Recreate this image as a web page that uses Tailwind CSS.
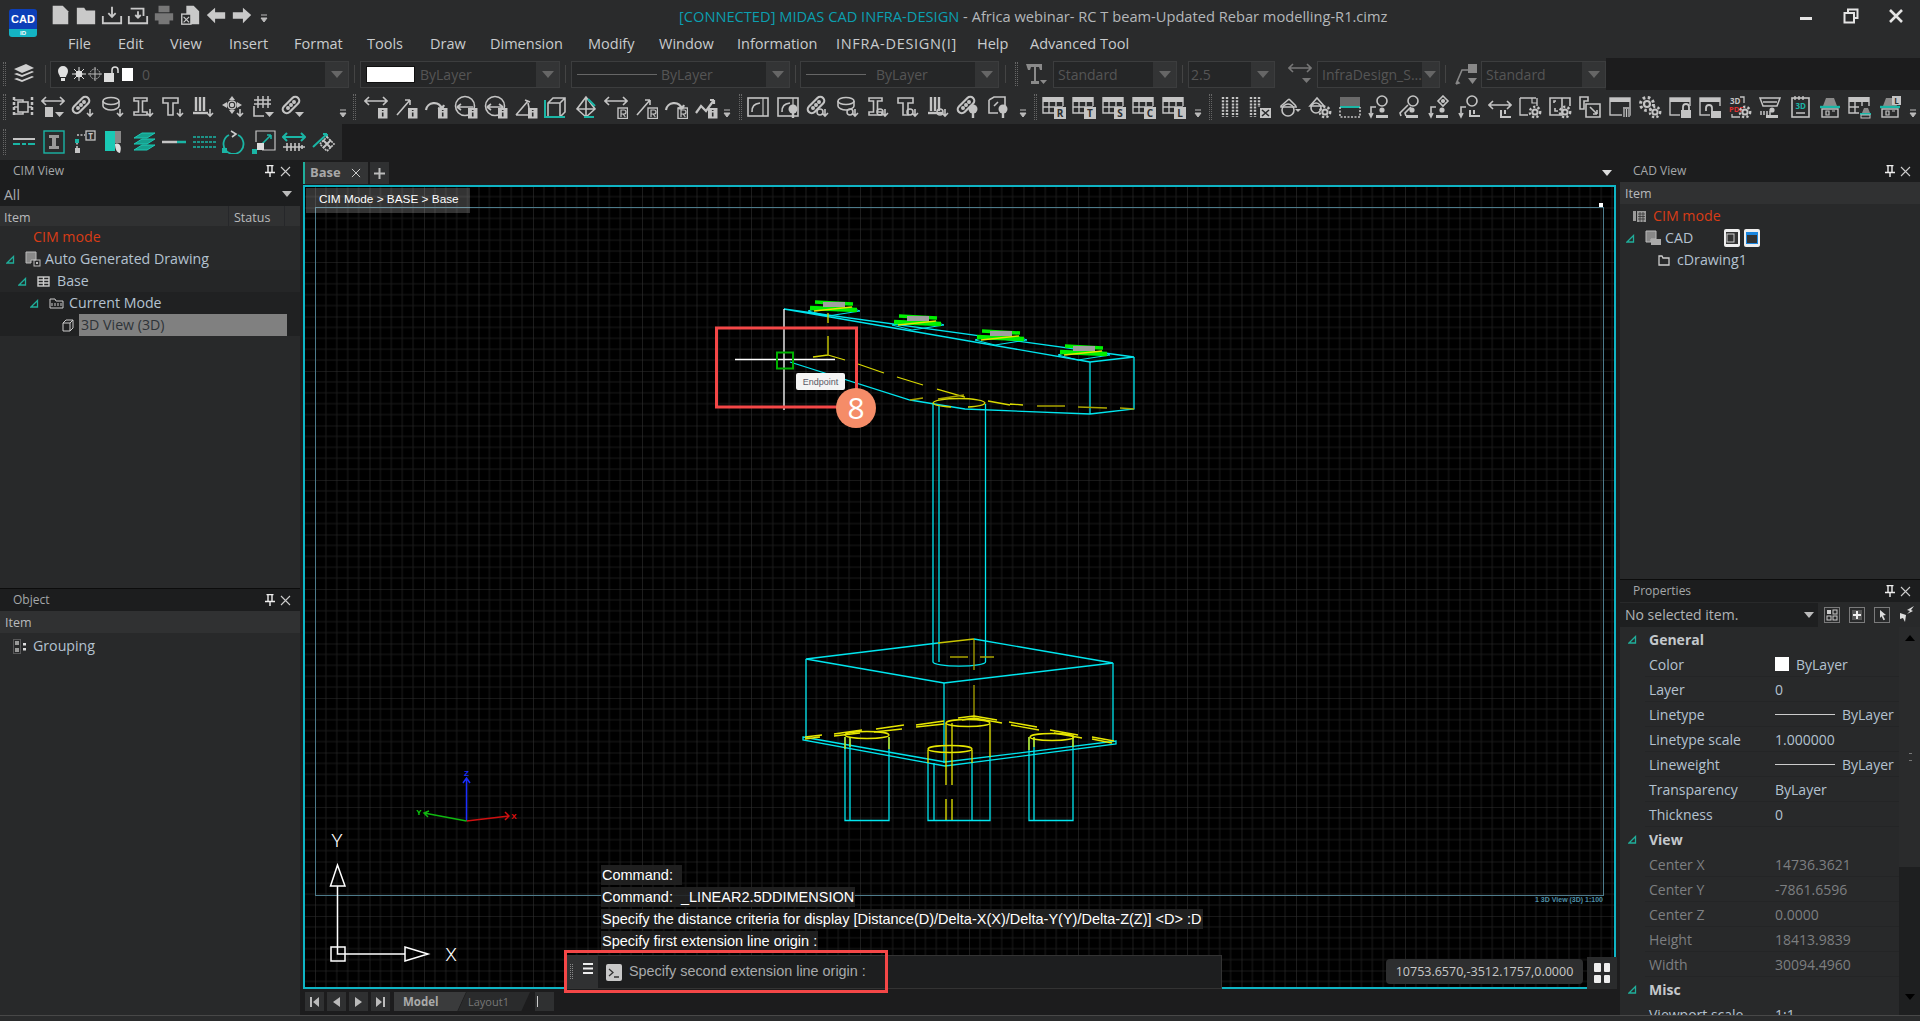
<!DOCTYPE html>
<html lang="en">
<head>
  <meta charset="UTF-8">
  <title>MIDAS CAD INFRA-DESIGN</title>
  <script src="https://cdn.jsdelivr.net/npm/@tailwindcss/browser@4"></script>
</head>
<body class="w-[1920px] h-[1021px] overflow-hidden flex flex-col bg-[#1c1c1d] text-[#c4c4c4] font-['Open_Sans',sans-serif]">

<!-- shared icon parts -->
<svg class="absolute w-0 h-0">
  <defs>
    <path id="car" d="M14 17h9l-4.5 5z" fill="currentColor" stroke="none"/>
    <path id="dn" d="M19 14v7M16 18l3 3 3-3"/>
    <g id="pill"><rect x="0" y="6" width="20" height="8" rx="4" transform="rotate(-45 10 10)" stroke-width="2.2"/><circle cx="7" cy="13" r="1.2" fill="currentColor"/><circle cx="10" cy="10" r="1.2" fill="currentColor"/><circle cx="13" cy="7" r="1.2" fill="currentColor"/></g>
    <g id="ring"><ellipse cx="10" cy="6" rx="8" ry="3.5"/><path d="M2 6v5c0 2 4 4 8 4s8-2 8-4V6"/></g>
    <path id="ibeam" d="M3 3h13v3h-4.5v11H16v3H3v-3h4.5V6H3z"/>
    <path id="tbeam" d="M2 3h15v5h-5v12H7V8H2z"/>
    <g id="comb"><path d="M5 2v14M9 2v14M13 2v14" stroke-width="2.4"/><path d="M2 18h15" stroke-width="2.4"/></g>
    <g id="hier"><rect x="7" y="7" width="10" height="10"/><path d="M3 2v20M21 2v20" stroke-width="2.5" stroke-dasharray="3 2"/><path d="M3 5h9v2M3 19h9v-2M21 12h-4M3 12h4"/></g>
    <path id="hdim" d="M1 6h22M5 2L1 6l4 4M19 2l4 4-4 4"/>
    <path id="ddim" d="M3 20L16 5M16 5h-5M16 5v5"/>
    <path id="arc" d="M2 15c1-8 13-10 16-1M18 14l-4-1M18 14l2-4" stroke-width="2.2"/>
    <g id="circ"><circle cx="11" cy="11" r="9.5"/><path d="M3 12h16M3 12l4-3M3 12l4 3"/></g>
    <path id="ang" d="M2 20L14 6M2 20h14M11 5l5 2M14 8l2 10"/>
    <path id="zig" d="M2 18l5-7 5 5 8-11M20 5l-4 0M20 5v4" stroke-width="2.2"/>
    <g id="bi"><rect x="14" y="13" width="9.5" height="10.5" fill="currentColor" stroke="none"/><path d="M18.7 15v1M18.7 17.5v4" stroke="#2a2b2c" stroke-width="1.6"/></g>
    <g id="br"><rect x="14" y="13" width="9.5" height="10.5" fill="none" stroke="currentColor" stroke-width="1.4"/><path d="M17 22v-7h3a2 2 0 010 4h-3M19 19l2.4 3" stroke-width="1.2"/></g>
    <g id="panel"><rect x="2" y="3" width="20" height="18"/><path d="M17 3v18" stroke-width="1.2"/><path d="M6 17c0-6 2-8 8-9" /></g>
    <g id="bulb"><circle cx="17" cy="14" r="4.5" fill="currentColor" stroke="none"/><path d="M17 18v5" stroke-width="2.4"/></g>
    <circle id="rn" cx="14" cy="17" r="3" stroke-width="1.5"/>
    <g id="tbl"><rect x="1" y="2" width="20" height="5" fill="currentColor" stroke="none"/><path d="M1 2v16h11M21 2v9M1 12h20M7 7v11M14 7v4" stroke-width="1.4"/></g>
    <g id="dots"><path d="M5 2v20M9 2v20M15 2v20M19 2v20" stroke-width="2.4" stroke-dasharray="2 1.2"/></g>
    <g id="gear"><circle cx="17" cy="17" r="2.6" stroke-width="2"/><circle cx="17" cy="17" r="5.2" stroke-width="2.4" stroke-dasharray="2.2 2.2"/></g>
    <g id="win"><rect x="2" y="3" width="20" height="17" stroke-width="1.4"/><path d="M2 5h20" stroke-width="4"/></g>
    <g id="per"><circle cx="14" cy="15" r="2.6" fill="currentColor" stroke="none"/><path d="M8 21.5h12" stroke-width="3"/></g>
    <g id="node"><circle cx="14" cy="6" r="5"/><path d="M3 22V12h5M1 18l2 4 2-4"/></g>
    <g id="lock"><rect x="13" y="15" width="10" height="8" fill="currentColor" stroke="none"/><path d="M15 15v-3a3 3 0 016 0v3" stroke-width="1.8"/></g>
    <g id="house"><path d="M5 11L8 3h8l3 8" fill="#8a8a8a" stroke="none"/><path d="M2 12h20" stroke="#1ab5a5" stroke-width="2.4"/><rect x="4" y="14" width="16" height="8" stroke-width="1.4"/><path d="M8 16h3v4H8zM14 16h3" stroke-width="1.2"/></g>
    <path id="tri" d="M1 8h6.5V1.5zM3.5 6.5" fill="none" stroke="#1fae9b" stroke-width="1.3"/>
    <g id="pin"><path d="M2.5 0.5h7M4 1v6M8 1v6M1 7.5h10M6 8v4" stroke="#eee" fill="none" stroke-width="1.4"/></g>
    <path id="cross" d="M1 1l9 9M10 1l-9 9" stroke="#ccc" fill="none" stroke-width="1.1"/>
    <g id="plate">
      <path d="M-26 4l9-3M-26 4L-6 9 26 4M18 1l8 3" stroke="#00e5ee" fill="none"/>
      <path d="M-19-5L19-3" stroke="#00f000" stroke-width="3.5"/>
      <path d="M-24 1L23 3" stroke="#00f000" stroke-width="4.500"/>
      <rect x="-11" y="-5" width="22" height="5" fill="#a0a0a0"/>
      <path d="M-20 4L18 0" stroke="#e6e600" stroke-width="1.5"/>
    </g>
    <pattern id="grid" x="424" y="807" width="54.5" height="54.5" patternUnits="userSpaceOnUse">
      <path d="M10.9 0v54.5M21.8 0v54.5M32.7 0v54.5M43.6 0v54.5M0 10.9h54.5M0 21.8h54.5M0 32.7h54.5M0 43.6h54.5" stroke="#1a1a1a" fill="none"/>
      <path d="M0 0v54.5M0 0h54.5" stroke="#2f2f2f" fill="none" stroke-width="1.2"/>
    </pattern>
  </defs>
</svg>

<!-- title bar -->
<div class="h-[30px] shrink-0 bg-[#2a2b2c] flex items-start">
  <div class="ml-[9px] mt-[9px] w-[28px] h-[28px] rounded-[3px] overflow-hidden flex flex-col relative z-10">
    <div class="h-[20px] bg-[#0d3fb8] text-white text-[11px] leading-[20px] font-bold text-center font-['Liberation_Sans',sans-serif]">CAD</div>
    <div class="h-[8px] bg-[#14b4c4] text-white text-[6px] leading-[8px] font-bold text-center font-['Liberation_Sans',sans-serif]">ID</div>
  </div>
  <div class="ml-[12px] mt-[4px] flex gap-[4px] text-[#c9c9c9] [&>svg]:w-[22px] [&>svg]:h-[22px] [&>svg]:fill-none [&>svg]:stroke-current [&>svg]:stroke-2">
    <svg viewBox="0 0 24 24"><path d="M4 2h11l6 6v14H4z" fill="currentColor" stroke="none"/></svg>
    <svg viewBox="0 0 24 24"><path d="M2 4h8l2 3h10v15H2z" fill="currentColor" stroke="none"/></svg>
    <svg viewBox="0 0 24 24"><path d="M2 13v8h20v-8M12 3v11M8 10l4 4 4-4"/></svg>
    <svg viewBox="0 0 24 24"><path d="M2 13v8h20v-8M4 5h14v8M12 8v7M9 12l3 3 3-3"/></svg>
    <svg viewBox="0 0 24 24" class="text-[#777]"><path d="M6 2h12v7H6zM2 10h20v8H2zM6 16h12v6H6z" fill="currentColor" stroke="none"/></svg>
    <svg viewBox="0 0 24 24"><path d="M8 2h8l6 6v14H13V11H8z" fill="currentColor" stroke="none"/><rect x="3" y="11" width="10" height="11" stroke-width="1.5"/><path d="M5 14l6 6M11 14l-6 6" stroke-width="1.3"/></svg>
    <svg viewBox="0 0 24 24"><path d="M2 12l9-8v5h11v7H11v5z" fill="currentColor" stroke="none"/></svg>
    <svg viewBox="0 0 24 24"><path d="M22 12l-9-8v5H2v7h11v5z" fill="currentColor" stroke="none"/></svg>
  </div>
  <svg class="w-[8px] h-[10px] ml-[7px] mt-[14px] text-[#bbb]" viewBox="0 0 8 10"><path d="M1 1h6M1 4h6l-3 4z" stroke="currentColor" fill="currentColor"/></svg>
  <div class="ml-[411px] mt-[5px] text-[14.65px] leading-[22px] whitespace-nowrap text-[#b4b7ba]"><span class="text-[#0b9fb0]">[CONNECTED] MIDAS CAD INFRA-DESIGN</span> - Africa webinar- RC T beam-Updated Rebar modelling-R1.cimz</div>
  <div class="ml-auto flex mr-[2px] text-[#e4e4e4]">
    <div class="w-[45px] h-[32px] flex items-center justify-center"><div class="w-[12px] h-[3px] bg-[#e4e4e4] mt-[4px]"></div></div>
    <div class="w-[45px] h-[32px] flex items-center justify-center"><svg class="w-[16px] h-[16px]" viewBox="0 0 16 16" fill="none" stroke="currentColor" stroke-width="2"><path d="M5 4V1.5h9.5V10H11"/><rect x="1.5" y="5" width="9.5" height="9.5"/></svg></div>
    <div class="w-[45px] h-[32px] flex items-center justify-center"><svg class="w-[14px] h-[14px]" viewBox="0 0 14 14" stroke="currentColor" stroke-width="2.6"><path d="M1 1l12 12M13 1L1 13"/></svg></div>
  </div>
</div>

<!-- menu -->
<div class="h-[28px] shrink-0 bg-[#2a2b2c] flex items-center pl-[68px] text-[14.5px] text-[#c9ccce] whitespace-nowrap">
  <span class="w-[50px]">File</span>
  <span class="w-[52px]">Edit</span>
  <span class="w-[59px]">View</span>
  <span class="w-[65px]">Insert</span>
  <span class="w-[73px]">Format</span>
  <span class="w-[63px]">Tools</span>
  <span class="w-[60px]">Draw</span>
  <span class="w-[98px]">Dimension</span>
  <span class="w-[71px]">Modify</span>
  <span class="w-[78px]">Window</span>
  <span class="w-[99px]">Information</span>
  <span class="w-[141px] tracking-[0.7px]">INFRA-DESIGN(I]</span>
  <span class="w-[53px]">Help</span>
  <span>Advanced Tool</span>
</div>

<!-- property toolbar -->
<div class="h-[32px] shrink-0 flex">
  <div class="w-[1606px] bg-[#2a2b2c] flex items-center text-[14px] text-[#555] relative">
    <div class="ml-[3px] w-[3px] h-[24px] border-x border-dotted border-[#666]"></div>
    <svg class="ml-[6px] w-[24px] h-[24px] text-[#cfcfcf]" viewBox="0 0 24 24" fill="currentColor"><path d="M2 7l12-5 8 4-12 5zM2 12l3-1 5 2 10-4 2 1-12 5zM2 17l3-1 5 2 10-4 2 1-12 5z"/></svg>
    <div class="ml-[9px] w-px h-[18px] bg-[#444]"></div>
    <div class="ml-[4px] w-[299px] h-[27px] flex items-center border border-[#3c3d3e] bg-[#252627]">
      <svg class="ml-[6px] w-[12px] h-[18px] text-[#e0e0e0]" viewBox="0 0 12 18" fill="currentColor"><path d="M6 1a5 5 0 015 5c0 3-2 4-2 6H3c0-2-2-3-2-6a5 5 0 015-5zM4 13h4v3H4z"/></svg>
      <svg class="ml-[3px] w-[14px] h-[14px] text-[#ddd]" viewBox="0 0 14 14" stroke="currentColor"><path d="M7 0v14M0 7h14M2 2l10 10M12 2L2 12"/><circle cx="7" cy="7" r="3" fill="currentColor"/></svg>
      <svg class="ml-[2px] w-[14px] h-[14px] text-[#bbb]" viewBox="0 0 14 14" stroke="currentColor"><circle cx="7" cy="7" r="5" fill="none" stroke-dasharray="1.5 1"/><path d="M7 0v14M0 7h14"/></svg>
      <svg class="ml-[2px] w-[16px] h-[16px] text-[#ddd]" viewBox="0 0 16 16"><path d="M0 7h10v9H0z" fill="currentColor"/><path d="M8 7V4a3 3 0 016 0v3" fill="none" stroke="currentColor" stroke-width="1.5"/></svg>
      <div class="ml-[2px] w-[11px] h-[13px] bg-white"></div>
      <span class="ml-[9px]">0</span>
      <div class="ml-auto w-[23px] h-full bg-[#333435] flex items-center justify-center"><div class="w-0 h-0 border-x-[6px] border-x-transparent border-t-[7px] border-t-[#666]"></div></div>
    </div>
    <div class="ml-[5px] w-px h-[18px] bg-[#444]"></div>
    <div class="ml-[5px] w-[200px] h-[27px] flex items-center border border-[#3c3d3e] bg-[#252627]">
      <div class="ml-[5px] w-[49px] h-[17px] bg-white border border-[#111]"></div>
      <span class="ml-[5px]">ByLayer</span>
      <div class="ml-auto w-[23px] h-full bg-[#333435] flex items-center justify-center"><div class="w-0 h-0 border-x-[6px] border-x-transparent border-t-[7px] border-t-[#666]"></div></div>
    </div>
    <div class="ml-[5px] w-px h-[18px] bg-[#444]"></div>
    <div class="ml-[5px] w-[219px] h-[27px] flex items-center border border-[#3c3d3e] bg-[#252627]">
      <div class="ml-[5px] w-[80px] h-px bg-[#666]"></div>
      <span class="ml-[4px]">ByLayer</span>
      <div class="ml-auto w-[23px] h-full bg-[#333435] flex items-center justify-center"><div class="w-0 h-0 border-x-[6px] border-x-transparent border-t-[7px] border-t-[#666]"></div></div>
    </div>
    <div class="ml-[5px] w-px h-[18px] bg-[#444]"></div>
    <div class="ml-[4px] w-[199px] h-[27px] flex items-center border border-[#3c3d3e] bg-[#252627]">
      <div class="ml-[5px] w-[60px] h-px bg-[#666]"></div>
      <span class="ml-[10px]">ByLayer</span>
      <div class="ml-auto w-[23px] h-full bg-[#333435] flex items-center justify-center"><div class="w-0 h-0 border-x-[6px] border-x-transparent border-t-[7px] border-t-[#666]"></div></div>
    </div>
    <div class="ml-[6px] w-px h-[18px] bg-[#444]"></div>
    <div class="ml-[9px] w-[3px] h-[24px] border-x border-dotted border-[#666]"></div>
    <svg class="ml-[6px] w-[24px] h-[24px] text-[#8a8a8a]" viewBox="0 0 24 24"><path d="M2 2h16v6h-2l-1-3h-3v14h3v3H7v-3h3V5H7L6 8H4z" fill="currentColor"/><path d="M16 18h7l-3.5 4z" fill="currentColor"/></svg>
    <div class="ml-[5px] w-[124px] h-[27px] flex items-center border border-[#3c3d3e] bg-[#252627] pl-[4px]">
      <span>Standard</span>
      <div class="ml-auto w-[23px] h-full bg-[#333435] flex items-center justify-center"><div class="w-0 h-0 border-x-[6px] border-x-transparent border-t-[7px] border-t-[#666]"></div></div>
    </div>
    <div class="ml-[5px] w-px h-[18px] bg-[#444]"></div>
    <div class="ml-[5px] w-[87px] h-[27px] flex items-center border border-[#3c3d3e] bg-[#252627] pl-[2px]">
      <span>2.5</span>
      <div class="ml-auto w-[23px] h-full bg-[#333435] flex items-center justify-center"><div class="w-0 h-0 border-x-[6px] border-x-transparent border-t-[7px] border-t-[#666]"></div></div>
    </div>
    <svg class="ml-[13px] w-[24px] h-[24px] text-[#777] fill-none stroke-current stroke-[1.6]" viewBox="0 0 24 24"><use href="#hdim"/><path d="M14 16h9l-4.5 5z" fill="currentColor" stroke="none"/></svg>
    <div class="ml-[5px] w-[123px] h-[27px] flex items-center border border-[#3c3d3e] bg-[#252627] pl-[4px]">
      <span class="whitespace-nowrap">InfraDesign_S...</span>
      <div class="ml-auto w-[23px] h-full bg-[#333435] flex items-center justify-center"><div class="w-0 h-0 border-x-[6px] border-x-transparent border-t-[7px] border-t-[#666]"></div></div>
    </div>
    <div class="ml-[5px] w-px h-[18px] bg-[#444]"></div>
    <svg class="ml-[8px] w-[24px] h-[24px] text-[#888] fill-none stroke-current stroke-[1.6]" viewBox="0 0 24 24"><path d="M2 22l6-14h6M2 22l3-1-2-2"/><rect x="14" y="2" width="9" height="9" fill="currentColor" stroke="none"/><path d="M14 16h9l-4.5 6z" fill="currentColor" stroke="none"/></svg>
    <div class="ml-[3px] w-[125px] h-[27px] flex items-center border border-[#3c3d3e] bg-[#252627] pl-[4px]">
      <span>Standard</span>
      <div class="ml-auto w-[23px] h-full bg-[#333435] flex items-center justify-center"><div class="w-0 h-0 border-x-[6px] border-x-transparent border-t-[7px] border-t-[#666]"></div></div>
    </div>
  </div>
</div>

<!-- tool row 2 -->
<div class="h-[34px] shrink-0 bg-[#2a2b2c] flex items-center">
  <div class="ml-[3px] w-[3px] h-[26px] border-x border-dotted border-[#666]"></div>
  <div class="ml-[5px] flex gap-[6px] [&>svg]:w-[24px] [&>svg]:h-[24px] [&>svg]:shrink-0 [&>svg]:fill-none [&>svg]:stroke-current [&>svg]:stroke-[1.6]">
    <svg viewBox="0 0 24 24"><use href="#hier"/></svg>
    <svg viewBox="0 0 24 24"><use href="#hdim"/><rect x="4" y="12" width="8" height="10" fill="currentColor" stroke="none"/><use href="#car"/></svg>
    <svg viewBox="0 0 24 24"><use href="#pill"/><use href="#dn"/></svg>
    <svg viewBox="0 0 24 24"><use href="#ring"/><use href="#dn"/></svg>
    <svg viewBox="0 0 24 24"><use href="#ibeam"/><use href="#dn"/></svg>
    <svg viewBox="0 0 24 24"><use href="#tbeam"/><use href="#dn"/></svg>
    <svg viewBox="0 0 24 24"><use href="#comb"/><use href="#dn"/></svg>
    <svg viewBox="0 0 24 24"><circle cx="11" cy="10" r="4"/><circle cx="11" cy="10" r="1.4" fill="currentColor"/><path d="M11 1l-3 4h6zM11 19l-3-4h6zM1 10l5-3v6zM21 10l-5-3v6z" fill="currentColor" stroke="none"/><use href="#dn"/></svg>
    <svg viewBox="0 0 24 24"><path d="M7 1v12M12 1v12M17 1v12M3 5h17M3 9h17" stroke-width="1.5"/><path d="M3 11v10h10"/><use href="#car"/></svg>
    <svg viewBox="0 0 24 24"><use href="#pill"/><use href="#car"/></svg>
  </div>
  <svg class="ml-[34px] w-[8px] h-[10px] mt-[14px] text-[#bbb]" viewBox="0 0 8 10"><path d="M1 1h6M1 4h6l-3 4z" stroke="currentColor" fill="currentColor"/></svg>
  <div class="ml-[6px] w-[3px] h-[26px] border-x border-dotted border-[#666]"></div>
  <div class="ml-[8px] flex gap-[6px] [&>svg]:w-[24px] [&>svg]:h-[24px] [&>svg]:shrink-0 [&>svg]:fill-none [&>svg]:stroke-current [&>svg]:stroke-[1.6]">
    <svg viewBox="0 0 24 24"><use href="#hdim"/><use href="#bi"/></svg>
    <svg viewBox="0 0 24 24"><use href="#ddim"/><use href="#bi"/></svg>
    <svg viewBox="0 0 24 24"><use href="#arc"/><use href="#bi"/></svg>
    <svg viewBox="0 0 24 24"><use href="#circ"/><use href="#bi"/></svg>
    <svg viewBox="0 0 24 24"><use href="#circ"/><path d="M19 12l-4-3M19 12l-4 3"/><use href="#bi"/></svg>
    <svg viewBox="0 0 24 24"><use href="#ang"/><use href="#bi"/></svg>
    <svg viewBox="0 0 24 24"><path d="M4 8l5-5h12v14l-5 5H4zM4 8h12v14M16 8l5-5"/><path d="M1 5v17h20" stroke="#1ab5a5" stroke-width="2"/></svg>
    <svg viewBox="0 0 24 24"><path d="M12 2L3 14l9 8 9-8zM12 2v20M3 14h18"/><path d="M14 4l7 7M10 22H20" stroke="#1ab5a5" stroke-width="2"/></svg>
    <svg viewBox="0 0 24 24"><use href="#hdim"/><use href="#br"/></svg>
    <svg viewBox="0 0 24 24"><use href="#ddim"/><use href="#br"/></svg>
    <svg viewBox="0 0 24 24"><use href="#arc"/><use href="#br"/></svg>
    <svg viewBox="0 0 24 24"><use href="#zig"/><use href="#bi"/></svg>
  </div>
  <svg class="ml-[5px] w-[8px] h-[10px] mt-[14px] text-[#bbb]" viewBox="0 0 8 10"><path d="M1 1h6M1 4h6l-3 4z" stroke="currentColor" fill="currentColor"/></svg>
  <div class="ml-[8px] w-[3px] h-[26px] border-x border-dotted border-[#666]"></div>
  <div class="ml-[4px] flex gap-[6px] [&>svg]:w-[24px] [&>svg]:h-[24px] [&>svg]:shrink-0 [&>svg]:fill-none [&>svg]:stroke-current [&>svg]:stroke-[1.6]">
    <svg viewBox="0 0 24 24"><use href="#panel"/></svg>
    <svg viewBox="0 0 24 24"><use href="#panel"/><use href="#bulb"/></svg>
    <svg viewBox="0 0 24 24"><use href="#pill"/><use href="#rn"/><use href="#dn"/></svg>
    <svg viewBox="0 0 24 24"><use href="#ring"/><use href="#rn"/><use href="#dn"/></svg>
    <svg viewBox="0 0 24 24"><use href="#ibeam"/><use href="#rn"/><use href="#dn"/></svg>
    <svg viewBox="0 0 24 24"><use href="#tbeam"/><use href="#rn"/><use href="#dn"/></svg>
    <svg viewBox="0 0 24 24"><use href="#comb"/><use href="#rn"/><use href="#dn"/></svg>
    <svg viewBox="0 0 24 24"><use href="#pill"/><use href="#bulb"/></svg>
    <svg viewBox="0 0 24 24"><path d="M3 5l5-3h11v10M3 5v13h9M8 11l4-4"/><use href="#bulb"/></svg>
  </div>
  <svg class="ml-[9px] w-[8px] h-[10px] mt-[14px] text-[#bbb]" viewBox="0 0 8 10"><path d="M1 1h6M1 4h6l-3 4z" stroke="currentColor" fill="currentColor"/></svg>
  <div class="ml-[7px] w-[3px] h-[26px] border-x border-dotted border-[#666]"></div>
  <div class="ml-[5px] flex gap-[6px] [&>svg]:w-[24px] [&>svg]:h-[24px] [&>svg]:shrink-0 [&>svg]:fill-none [&>svg]:stroke-current [&>svg]:stroke-[1.6]">
    <svg viewBox="0 0 24 24"><use href="#tbl"/><rect x="12" y="12" width="12" height="12" fill="currentColor" stroke="none"/><text x="18" y="22" font-size="10" font-weight="700" fill="#2a2b2c" stroke="none" text-anchor="middle">R</text></svg>
    <svg viewBox="0 0 24 24"><use href="#tbl"/><rect x="12" y="12" width="12" height="12" fill="currentColor" stroke="none"/><text x="18" y="22" font-size="10" font-weight="700" fill="#2a2b2c" stroke="none" text-anchor="middle">T</text></svg>
    <svg viewBox="0 0 24 24"><use href="#tbl"/><rect x="12" y="12" width="12" height="12" fill="currentColor" stroke="none"/><text x="18" y="22" font-size="10" font-weight="700" fill="#2a2b2c" stroke="none" text-anchor="middle">S</text></svg>
    <svg viewBox="0 0 24 24"><use href="#tbl"/><rect x="12" y="12" width="12" height="12" fill="currentColor" stroke="none"/><text x="18" y="22" font-size="10" font-weight="700" fill="#2a2b2c" stroke="none" text-anchor="middle">C</text></svg>
    <svg viewBox="0 0 24 24"><use href="#tbl"/><rect x="12" y="12" width="12" height="12" fill="currentColor" stroke="none"/><text x="18" y="22" font-size="10" font-weight="700" fill="#2a2b2c" stroke="none" text-anchor="middle">L</text></svg>
  </div>
  <svg class="ml-[8px] w-[8px] h-[10px] mt-[14px] text-[#bbb]" viewBox="0 0 8 10"><path d="M1 1h6M1 4h6l-3 4z" stroke="currentColor" fill="currentColor"/></svg>
  <div class="ml-[7px] w-[3px] h-[26px] border-x border-dotted border-[#666]"></div>
  <div class="ml-[6px] flex gap-[6px] [&>svg]:w-[24px] [&>svg]:h-[24px] [&>svg]:shrink-0 [&>svg]:fill-none [&>svg]:stroke-current [&>svg]:stroke-[1.6]">
    <svg viewBox="0 0 24 24"><use href="#dots"/></svg>
    <svg viewBox="0 0 24 24"><path d="M3 2v20M7 2v20M11 2v10" stroke-width="2.4" stroke-dasharray="2 1.2"/><rect x="12" y="13" width="11" height="10" fill="currentColor" stroke="none"/><path d="M14 15l7 6M21 15l-7 6" stroke="#2a2b2c"/></svg>
    <svg viewBox="0 0 24 24"><path d="M11 4L3 11l0 1h16M11 4l7 7"/><circle cx="10" cy="15" r="6"/><path d="M17 14h6l-3 3z" fill="currentColor" stroke="none"/></svg>
    <svg viewBox="0 0 24 24"><path d="M9 3L2 11h14zM9 3l7 8"/><circle cx="8" cy="13" r="5"/><use href="#gear"/></svg>
    <svg viewBox="0 0 24 24"><rect x="2" y="2" width="20" height="9" fill="#6a6a6a" stroke="none"/><path d="M2 12h20" stroke="#1ab5a5" stroke-width="2"/><path d="M2 12v10h20V12" stroke-dasharray="2 1.5"/></svg>
    <svg viewBox="0 0 24 24"><use href="#node"/><use href="#per"/></svg>
    <svg viewBox="0 0 24 24"><circle cx="15" cy="6" r="5"/><path d="M10 10L2 18l1 3M13 12l-6 6 1 3"/><use href="#per"/></svg>
    <svg viewBox="0 0 24 24"><path d="M15 1l5 5-5 5-5-5z"/><circle cx="15" cy="6" r="1.3" fill="currentColor"/><path d="M3 22V12h5M1 18l2 4 2-4"/><use href="#per"/></svg>
    <svg viewBox="0 0 24 24"><use href="#node"/><path d="M12 15v6h10M16 15v4" stroke-width="2"/></svg>
    <svg viewBox="0 0 24 24"><use href="#hdim" y="4"/><path d="M13 15v7h10M17 15v4" stroke-width="2"/></svg>
    <svg viewBox="0 0 24 24"><path d="M2 3h16M2 3v17h8M19 3v8" stroke-width="1.4"/><path d="M14 3v5h5" stroke-width="1.2"/><use href="#gear"/></svg>
    <svg viewBox="0 0 24 24"><path d="M2 3h12v17H2zM14 3h8v8M6 8V6h2M10 16h-3v-3"/><use href="#gear"/></svg>
    <svg viewBox="0 0 24 24"><path d="M2 2h8v4H6v8H2zM8 9h14v13H8z"/><path d="M12 12l7 7M19 19v-4M19 19h-4"/></svg>
    <svg viewBox="0 0 24 24"><use href="#win"/><rect x="14" y="12" width="8" height="11" fill="#2a2b2c" stroke="none"/><path d="M15 13h7M16 14v8M18.5 14v8M21 14v8" stroke-width="1.3"/></svg>
    <svg viewBox="0 0 24 24"><circle cx="9" cy="9" r="3" stroke-width="2.2"/><circle cx="9" cy="9" r="6.5" stroke-width="3" stroke-dasharray="2.6 2.5"/><use href="#gear"/></svg>
    <svg viewBox="0 0 24 24"><use href="#win"/><rect x="12" y="11" width="12" height="13" fill="#2a2b2c" stroke="none"/><use href="#lock"/></svg>
    <svg viewBox="0 0 24 24"><use href="#win"/><rect x="12" y="11" width="12" height="13" fill="#2a2b2c" stroke="none"/><rect x="13" y="16" width="10" height="7" fill="currentColor" stroke="none"/><path d="M8 16v-3a3 3 0 016 0v3" stroke-width="1.8"/></svg>
    <svg viewBox="0 0 24 24"><text x="2" y="9" font-size="8" fill="currentColor" stroke="none" font-weight="700">3D</text><text x="1" y="17" font-size="7.5" fill="#e03030" stroke="none" font-weight="700">PDF</text><path d="M12 2h4v6M4 19v3h8" stroke-width="1.3"/><use href="#gear"/></svg>
    <svg viewBox="0 0 24 24"><path d="M2 3h20l-3 8H5zM5 7h14" stroke-width="1.5"/><path d="M3 16v4M6 16v4M9 16v4M12 16v4" stroke-width="1.5"/><use href="#per"/></svg>
    <svg viewBox="0 0 24 24"><rect x="4" y="3" width="17" height="19"/><path d="M7 1v4M11 1v4M15 1v4M8 18h9" stroke-width="1.4"/><text x="7.5" y="14" font-size="8" font-weight="700" fill="#1ab5a5" stroke="none">3D</text></svg>
    <svg viewBox="0 0 24 24"><use href="#house"/></svg>
    <svg viewBox="0 0 24 24"><use href="#tbl"/><rect x="11" y="11" width="13" height="13" fill="#2a2b2c" stroke="none"/><path d="M14 18l2-5h4l2 5" fill="#8a8a8a" stroke="none"/><path d="M12 19h11" stroke="#1ab5a5" stroke-width="2"/><rect x="13" y="20" width="9" height="3" stroke-width="1"/></svg>
    <svg viewBox="0 0 24 24"><use href="#house"/><rect x="14" y="1" width="9" height="9" fill="currentColor" stroke="none"/><text x="18.5" y="9" font-size="8" font-weight="700" fill="#2a2b2c" stroke="none" text-anchor="middle">L</text></svg>
  </div>
  <svg class="ml-[7px] w-[8px] h-[10px] mt-[14px] text-[#bbb]" viewBox="0 0 8 10"><path d="M1 1h6M1 4h6l-3 4z" stroke="currentColor" fill="currentColor"/></svg>
</div>

<!-- tool row 3 -->
<div class="h-[36px] w-[342px] shrink-0 bg-[#2a2b2c] flex items-center">
  <div class="ml-[3px] w-[3px] h-[26px] border-x border-dotted border-[#666]"></div>
  <div class="ml-[6px] flex gap-[6px] [&>svg]:w-[24px] [&>svg]:h-[24px] [&>svg]:shrink-0 [&>svg]:fill-none [&>svg]:stroke-current [&>svg]:stroke-[1.6]">
    <svg viewBox="0 0 24 24"><path d="M1 9h22" stroke-width="2"/><path d="M1 14h7M10 14h4M16 14h7" stroke="#1ab5a5" stroke-width="2"/></svg>
    <svg viewBox="0 0 24 24"><rect x="2" y="1" width="20" height="22" stroke="#1ab5a5" stroke-width="1.4"/><path d="M7 5h10v3h-3v8h3v3H7v-3h3V8H7z" fill="#999" stroke="none"/></svg>
    <svg viewBox="0 0 24 24"><path d="M5 9v10M5 5h8" stroke-dasharray="2 1.5"/><rect x="3" y="18" width="5" height="5" fill="currentColor" stroke="none"/><rect x="3" y="9" width="4" height="4" fill="#1ab5a5" stroke="none"/><rect x="14" y="1" width="9" height="9" stroke-width="1.3"/><text x="18.5" y="9" font-size="8" font-weight="700" fill="currentColor" stroke="none" text-anchor="middle">T</text></svg>
    <svg viewBox="0 0 24 24"><rect x="3" y="1" width="10" height="20" fill="#1ac9b5" stroke="none"/><path d="M13 1h6v12h-6z" fill="#888" stroke="none"/><path d="M13 14c5-2 7 3 5 9-3 0-5-4-5-9z" fill="#ddd" stroke="none"/></svg>
    <svg viewBox="0 0 24 24"><path d="M2 8l8-5h13l-8 5zM2 14l8-5h13l-8 5zM2 20l8-5h13l-8 5z" fill="#16a08e" stroke="#1ac9b5" stroke-width="1"/></svg>
    <svg viewBox="0 0 24 24"><path d="M0 12h15" stroke-width="2.5"/><path d="M15 12h9" stroke="#1ab5a5" stroke-width="2.5"/></svg>
    <svg viewBox="0 0 24 24" stroke-dasharray="3 1"><path d="M1 7h23M1 12h23M1 17h23" stroke="#1ab5a5" stroke-width="1.6"/></svg>
    <svg viewBox="0 0 24 24"><path d="M7 5a10 10 0 1 0 9 0" stroke="#1ab5a5" stroke-width="1.8"/><path d="M9 1l5 3-4 3" stroke="#ccc"/><rect x="0" y="18" width="5" height="5" fill="#1ab5a5" stroke="none"/></svg>
    <svg viewBox="0 0 24 24"><path d="M4 12V1h19v19H10" stroke-width="1.2"/><path d="M10 14l9-9M19 5h-4M19 5v4" stroke="#1ab5a5"/><rect x="5" y="13" width="7" height="7" fill="#ddd" stroke="none"/><rect x="0" y="19" width="5" height="5" fill="#1ab5a5" stroke="none"/></svg>
    <svg viewBox="0 0 24 24"><path d="M1 7h22M5 3L1 7l4 4M19 3l4 4-4 4" stroke="#1ab5a5" stroke-width="2"/><path d="M1 17h22M5 13v8M9 13v8M13 13v8M17 13v8M20 15v4"/></svg>
    <svg viewBox="0 0 24 24"><path d="M1 17l14-13M15 4h-4M15 4v4" stroke="#1ab5a5" stroke-width="2"/><rect x="10" y="9" width="10" height="10" stroke-dasharray="2 1" transform="rotate(45 15 14)"/><path d="M11 18l8-8M19 18l-8-8" stroke-width="2"/></svg>
  </div>
</div>

<!-- main area -->
<div class="h-[855px] shrink-0 flex">

  <!-- left docks -->
  <div class="w-[300px] shrink-0 flex flex-col bg-[#28292a]">
    <div class="h-[428px] flex flex-col">
      <div class="h-[22px] bg-[#1c1d1e] flex items-center pl-[13px] text-[12px] text-[#a4a7a9]">CIM View
        <svg class="ml-auto w-[12px] h-[13px]" viewBox="0 0 12 13"><use href="#pin"/></svg>
        <svg class="ml-[4px] mr-[9px] w-[11px] h-[11px]" viewBox="0 0 11 11"><use href="#cross"/></svg>
      </div>
      <div class="h-[24px] bg-[#1c1d1e] flex items-center pl-[4px] text-[14px] text-[#a8abae]">All
        <div class="ml-auto mr-[8px] w-0 h-0 border-x-[5px] border-x-transparent border-t-[6px] border-t-[#bbb]"></div>
      </div>
      <div class="h-[20px] bg-[#303132] flex items-center pl-[4px] text-[12.5px] text-[#b8babc]">
        <span class="w-[224px] pt-[4px]">Item</span>
        <span class="w-[57px] h-full border-x border-[#26272a] pl-[5px] leading-[24px]">Status</span>
      </div>
      <div class="h-[22px] flex items-center pl-[33px] text-[14.2px] text-[#d83c16]">CIM mode</div>
      <div class="h-[22px] flex items-center pl-[6px] text-[14.2px] text-[#b4c2d0] bg-[#28292a]">
        <svg class="w-[9px] h-[9px]" viewBox="0 0 9 9"><use href="#tri"/></svg>
        <svg class="ml-[10px] w-[16px] h-[16px] text-[#bbb]" viewBox="0 0 16 16" fill="none" stroke="currentColor"><path d="M1 1h10v8H6v3H1z" fill="#888"/><rect x="9" y="9" width="6" height="6"/><path d="M11 11l2 2M13 11l-2 2"/></svg>
        <span class="ml-[4px] whitespace-nowrap">Auto Generated Drawing</span>
      </div>
      <div class="h-[22px] flex items-center pl-[18px] text-[14.2px] text-[#b4c2d0] bg-[#252627]">
        <svg class="w-[9px] h-[9px]" viewBox="0 0 9 9"><use href="#tri"/></svg>
        <svg class="ml-[10px] w-[13px] h-[11px] text-[#ccc]" viewBox="0 0 13 11" fill="none" stroke="currentColor" stroke-width="1.4"><rect x="1" y="1" width="11" height="9"/><path d="M1 4h11M1 7h11M6.5 1v9"/></svg>
        <span class="ml-[7px]">Base</span>
      </div>
      <div class="h-[22px] flex items-center pl-[30px] text-[14.2px] text-[#b4c2d0] bg-[#202122]">
        <svg class="w-[9px] h-[9px]" viewBox="0 0 9 9"><use href="#tri"/></svg>
        <svg class="ml-[10px] w-[15px] h-[11px] text-[#ccc]" viewBox="0 0 15 11" fill="none" stroke="currentColor"><path d="M1 1h5l1 2h7v7H1z"/><path d="M3 5v3M6 5v3M9 5v3M12 5v3"/></svg>
        <span class="ml-[5px]">Current Mode</span>
      </div>
      <div class="h-[22px] flex items-center pl-[62px] text-[14.2px] text-[#2e3338] bg-[#202122]">
        <svg class="w-[12px] h-[13px] text-[#ccc]" viewBox="0 0 12 13" fill="none" stroke="currentColor"><path d="M1 4l3-3h7v8l-3 3H1zM1 4h7v8M8 4l3-3"/></svg>
        <span class="ml-[5px] w-[208px] h-full pl-[2px] bg-[#808080] leading-[22px]">3D View (3D)</span>
      </div>
    </div>
    <div class="flex-1 flex flex-col border-t border-[#0c0c0c]">
      <div class="h-[22px] bg-[#1c1d1e] flex items-center pl-[13px] text-[12px] text-[#a4a7a9]">Object
        <svg class="ml-auto w-[12px] h-[13px]" viewBox="0 0 12 13"><use href="#pin"/></svg>
        <svg class="ml-[4px] mr-[9px] w-[11px] h-[11px]" viewBox="0 0 11 11"><use href="#cross"/></svg>
      </div>
      <div class="h-[22px] bg-[#303132] flex items-center pl-[5px] pt-[3px] text-[12.5px] text-[#b8babc]">Item</div>
      <div class="h-[26px] flex items-center pl-[13px] text-[14.2px] text-[#b4c2d0]">
        <svg class="w-[14px] h-[15px]" viewBox="0 0 14 15" fill="#999"><rect x="0.5" y="0.5" width="7" height="14" fill="none" stroke="#888" stroke-dasharray="1 1"/><rect x="2" y="2" width="4" height="4"/><rect x="2" y="9" width="4" height="4"/><rect x="10" y="4" width="3" height="2.5" fill="#ddd"/><rect x="10" y="9" width="3" height="2.5" fill="#ddd"/></svg>
        <span class="ml-[6px]">Grouping</span>
      </div>
    </div>
  </div>

  <!-- drawing area -->
  <div class="w-[1320px] shrink-0 flex flex-col">
    <div class="h-[25px] shrink-0 flex items-start pt-[2px] pl-[3px] relative">
      <div class="w-[65px] h-[22px] bg-[#333435] border-l-2 border-[#1fae9b] flex items-center pl-[5px] text-[13px] font-bold text-[#a8a8a8]">Base
        <svg class="ml-[10px] w-[10px] h-[10px]" viewBox="0 0 11 11"><use href="#cross"/></svg>
      </div>
      <div class="ml-[2px] w-[19px] h-[22px] bg-[#2f3031] flex items-center justify-center text-[#bbb]"><svg class="w-[11px] h-[11px]" viewBox="0 0 11 11" stroke="currentColor" stroke-width="2"><path d="M5.5 0v11M0 5.500h11"/></svg></div>
      <div class="ml-auto mr-[8px] mt-[8px] w-0 h-0 border-x-[5px] border-x-transparent border-t-[6px] border-t-[#ddd]"></div>
    </div>
    <div class="relative ml-[3px] w-[1313px] h-[804px] shrink-0 border-2 border-[#0fb4c4] bg-black">
      <svg class="absolute inset-0" width="1309" height="800" viewBox="305 187 1309 800" fill="none">
        <rect x="305" y="187" width="1310" height="800" fill="url(#grid)"/>
        <rect x="315.500" y="207.500" width="1288" height="688" stroke="#4d7b8b"/>
        <rect x="1599" y="203" width="4" height="4" fill="#fff"/>
        <text x="1603" y="902" text-anchor="end" font-size="7" font-weight="700" fill="#4d8fa8" font-family="Liberation Sans">1 3D View (3D) 1:100</text>
        <!-- beam -->
        <g stroke="#00e5ee" stroke-width="1.300">
          <path d="M784 309L1134 357L1090 362L784 309"/>
          <path d="M1090 362V414M1134 357V409L1090 414L965 409L910 400L790 362"/>
          <path d="M933 404V662M939 404V662M985.500 404V662"/>
          <path d="M933 662a26 4 0 0 0 52.500 0"/>
        </g>
        <use href="#plate" x="834" y="307"/>
        <use href="#plate" x="918" y="321"/>
        <use href="#plate" x="1001" y="336"/>
        <use href="#plate" x="1084" y="351"/>
        <g stroke="#d8d800" stroke-width="1.300">
          <path d="M828 313v10M828 336v19M828 355l-15 2M828 355l17 5M858 364l26 9M897 377l26 8M937 389l28 8M988 401l22 4M1010 404l13 1"/>
          <path d="M910 400l13-2M938 399l26-4M1037 406l28 0M1078 407l29 1M1120 408l14 1" stroke="#aaa400"/>
          <path d="M933 403a26 4.500 0 0 1 26-4.500M959 398.500a26 4.500 0 0 1 26 4.500M933 403a26 4.500 0 0 0 18 4M968 407a26 4.500 0 0 0 17-4"/>
          <path d="M950 657h18M980 657h14M974 639v31" stroke="#aaa400"/>
        </g>
        <!-- footing -->
        <g stroke="#00e5ee" stroke-width="1.300">
          <path d="M938 643L806 659L944 683L1113 663L974 639"/>
          <path d="M806 659V737M944 683V763M1113 663V742"/>
          <path d="M803 737L945 762L1116 741V744L945 766L803 740Z"/>
          <path d="M845 737V820.500H889V737M850 737V820.500M1029 737V820.500H1073V737M1034 737V820.500"/>
          <path d="M928 763V820.500H990V757M934 763V820.500M972 763V820.500"/>
        </g>
        <g stroke="#e6e600" stroke-width="1.300">
          <path d="M938 643L974 639" stroke="#c8c400"/>
          <path d="M974 685v32" stroke="#aaa400"/>
          <path d="M805 737l17-2M805 739l15-2M834 734l28-4M834 736l26-3M876 729l28-4M874 732l28-3M916 725l28-4M916 727l28-3M958 718l16-2 23 4M962 720l12-2 28 5M1009 722l28 5M1011 725l28 5M1050 730l28 5M1054 733l28 5M1092 737l22 4M1092 739l20 4"/>
          <ellipse cx="867" cy="735" rx="22" ry="3.500"/>
          <ellipse cx="950" cy="749" rx="22" ry="3.500"/>
          <ellipse cx="968" cy="723" rx="22" ry="3.500"/>
          <ellipse cx="1052" cy="737" rx="22" ry="3.500"/>
          <path d="M946 723v62M952 723v62M946 799v21M952 799v21M990 724v33M928 750v13M972 750v13M845 737v12M850 737v10M889 737v12M1029 737v13M1034 737v10M1073 737v10" />
        </g>
        <!-- snap marker -->
        <path d="M784 309V410M735 359.500H835" stroke="#fff" stroke-width="1.300"/>
        <rect x="777" y="352.500" width="16" height="16" stroke="#00b000" stroke-width="2"/>
        <rect x="716.500" y="328" width="140" height="79" stroke="#f44747" stroke-width="3"/>
        <rect x="796" y="373" width="49" height="17" rx="2" fill="#f4f4f4"/>
        <text x="820.500" y="384.500" text-anchor="middle" font-size="9" fill="#5a5a66" font-family="Liberation Sans">Endpoint</text>
        <circle cx="856" cy="408" r="20" fill="#f58c68"/>
        <text x="856" y="419" text-anchor="middle" font-size="30" fill="#fff" font-family="Open Sans">8</text>
        <!-- big ucs -->
        <g stroke="#fff" stroke-width="1.500">
          <path d="M337.500 886V954H405M337.500 865L330.500 886H345ZM405 947V961L428 954Z"/>
          <rect x="331" y="947" width="14" height="14"/>
        </g>
        <text x="337" y="847" text-anchor="middle" font-size="19" font-weight="300" fill="#fff" font-family="Roboto">Y</text>
        <text x="451" y="961" text-anchor="middle" font-size="19" font-weight="300" fill="#fff" font-family="Roboto">X</text>
        <!-- small ucs -->
        <path d="M466.500 821V778M463 783l3.500-5 3.500 5" stroke="#1a2eff" stroke-width="1.500"/>
        <path d="M466.500 821L509 816M505 812l4 4-4 4" stroke="#d01010" stroke-width="1.500"/>
        <path d="M466.500 821L424 813M429 811l-5 2 4 4" stroke="#10b810" stroke-width="1.500"/>
        <text x="466.500" y="776" text-anchor="middle" font-size="8" font-weight="700" fill="#1a2eff" font-family="Liberation Sans">Z</text>
        <text x="514" y="818.500" text-anchor="middle" font-size="8" font-weight="700" fill="#e01010" font-family="Liberation Sans">X</text>
        <text x="419" y="815" text-anchor="middle" font-size="8" font-weight="700" fill="#10d010" font-family="Liberation Sans">Y</text>
      </svg>

      <!-- breadcrumb -->
      <div class="absolute left-[1px] top-[1px] w-[164px] h-[25px] bg-white/20 pl-[13px] text-[11.8px] leading-[23px] text-white font-['Liberation_Sans',sans-serif] whitespace-nowrap">CIM Mode &gt; BASE &gt; Base</div>

      <!-- command history -->
      <div class="absolute left-[296px] top-[678px] flex flex-col items-start gap-[2px] text-[14.5px] leading-[20px] text-white font-['Liberation_Sans',sans-serif] whitespace-nowrap [&>span]:bg-[#222]/90 [&>span]:px-[1px]">
        <span>Command:&nbsp;&nbsp;</span>
        <span>Command:&nbsp; _LINEAR2.5DDIMENSION</span>
        <span>Specify the distance criteria for display [Distance(D)/Delta-X(X)/Delta-Y(Y)/Delta-Z(Z)] &lt;D&gt; :D</span>
        <span>Specify first extension line origin :</span>
      </div>

      <!-- command input -->
      <div class="absolute left-[262px] top-[768px] w-[655px] h-[34px] bg-[#1d1e1f] border border-[#333] flex items-center">
        <div class="w-[30px] h-full bg-[#303132] flex items-start pt-[8px]">
          <div class="ml-[2px] w-[3px] h-[15px] border-x border-dotted border-[#888]"></div>
          <svg class="ml-[10px] mt-[-1px] w-[10px] h-[11px]" viewBox="0 0 10 11" fill="#eee"><path d="M0 0h10v2H0zM0 4.500h10v2H0zM0 9h10v2H0z"/></svg>
        </div>
        <svg class="ml-[8px] w-[16px] h-[17px]" viewBox="0 0 16 17"><rect width="16" height="17" rx="2" fill="#c8c8c8"/><path d="M3 5l4 3.500L3 12M8 13h5" stroke="#333" stroke-width="1.300" fill="none"/></svg>
        <span class="ml-[7px] text-[14.4px] text-[#a8aaac] font-['Liberation_Sans',sans-serif] whitespace-nowrap">Specify second extension line origin :</span>
      </div>
      <div class="absolute left-[259px] top-[763px] w-[324px] h-[43px] border-[3px] border-[#f44747] z-10"></div>

      <!-- coords + viewport layout -->
      <div class="absolute left-[1081px] top-[772px] w-[197px] h-[25px] rounded-[4px] bg-[#2d2e2f] text-[12.5px] leading-[25px] text-center text-[#c8c8c8] whitespace-nowrap">10753.6570,-3512.1757,0.0000</div>
      <div class="absolute left-[1282px] top-[770px] w-[30px] h-[32px] bg-[#2a2b2c] grid grid-cols-2 gap-[3px] px-[7px] py-[6px]">
        <div class="bg-[#eee] rounded-[1px]"></div><div class="bg-[#eee] rounded-[1px]"></div><div class="bg-[#eee] rounded-[1px]"></div><div class="bg-[#eee] rounded-[1px]"></div>
      </div>
    </div>

    <!-- layout tabs -->
    <div class="flex-1 flex items-start pt-[3px] pl-[5px]">
      <div class="flex gap-[3px] [&>div]:w-[19px] [&>div]:h-[19px] [&>div]:bg-[#2f3031] [&>div]:flex [&>div]:items-center [&>div]:justify-center">
        <div><svg class="w-[9px] h-[10px]" viewBox="0 0 9 10" fill="#bbb"><path d="M0 0h2v10H0zM9 0v10L3 5z"/></svg></div>
        <div><svg class="w-[7px] h-[10px]" viewBox="0 0 7 10" fill="#bbb"><path d="M7 0v10L0 5z"/></svg></div>
        <div><svg class="w-[7px] h-[10px]" viewBox="0 0 7 10" fill="#bbb"><path d="M0 0v10l7-5z"/></svg></div>
        <div><svg class="w-[9px] h-[10px]" viewBox="0 0 9 10" fill="#bbb"><path d="M9 0H7v10h2zM0 0v10l6-5z"/></svg></div>
      </div>
      <div class="ml-[4px] w-[72px] h-[19px] bg-[#3a3b3c] [clip-path:polygon(0_0,100%_0,88%_100%,0_100%)] text-[11.5px] leading-[19px] font-bold text-[#aaa] pl-[9px]">Model</div>
      <div class="ml-[-8px] w-[72px] h-[19px] bg-[#2a2b2c] [clip-path:polygon(12%_0,100%_0,88%_100%,0_100%)] text-[11px] leading-[19px] text-[#777] pl-[10px]">Layout1</div>
      <div class="ml-[5px] w-[19px] h-[19px] bg-[#2f3031] flex items-center pl-[2px]"><div class="w-px h-[11px] bg-[#ccc]"></div></div>
    </div>
  </div>

  <!-- right docks -->
  <div class="w-[300px] shrink-0 flex flex-col bg-[#28292a]">
    <div class="h-[419px] flex flex-col">
      <div class="h-[22px] bg-[#1c1d1e] flex items-center pl-[13px] text-[12px] text-[#a4a7a9]">CAD View
        <svg class="ml-auto w-[12px] h-[13px]" viewBox="0 0 12 13"><use href="#pin"/></svg>
        <svg class="ml-[4px] mr-[9px] w-[11px] h-[11px]" viewBox="0 0 11 11"><use href="#cross"/></svg>
      </div>
      <div class="h-[22px] bg-[#303132] flex items-center pl-[5px] pt-[3px] text-[12.5px] text-[#b8babc]">Item</div>
      <div class="h-[22px] mt-[1px] flex items-center pl-[13px] text-[14.2px] text-[#d83c16]">
        <svg class="w-[13px] h-[13px]" viewBox="0 0 13 13" fill="#9a9a9a"><path d="M0 1h3v10H0z"/><path d="M4 1h9v11H4z"/><path d="M5 4h7M5 6.500h7M5 9h7M7 2v10M10 2v10" stroke="#28292a" stroke-width=".7"/></svg>
        <span class="ml-[7px]">CIM mode</span>
      </div>
      <div class="h-[22px] flex items-center pl-[6px] text-[14.2px] text-[#b4c2d0]">
        <svg class="w-[9px] h-[9px]" viewBox="0 0 9 9"><use href="#tri"/></svg>
        <svg class="ml-[10px] w-[16px] h-[16px] text-[#bbb]" viewBox="0 0 16 16" fill="none" stroke="currentColor"><path d="M1 1h10v8H6v3H1z" fill="#888"/><rect x="6" y="9" width="10" height="6" fill="#aaa" stroke="none"/></svg>
        <span class="ml-[4px] w-[59px]">CAD</span>
        <svg class="w-[16px] h-[18px]" viewBox="0 0 16 18"><rect width="16" height="18" rx="2" fill="#eee"/><rect x="2" y="3" width="12" height="12" fill="#333"/><rect x="3" y="5" width="7" height="8" fill="none" stroke="#ccc"/></svg>
        <svg class="ml-[4px] w-[16px] h-[18px]" viewBox="0 0 16 18"><rect width="16" height="18" rx="2" fill="#eee"/><rect x="2" y="3" width="12" height="12" fill="#1a86e0"/><rect x="3" y="6" width="10" height="8" fill="#333"/></svg>
      </div>
      <div class="h-[22px] flex items-center pl-[38px] text-[14.2px] text-[#b4c2d0]">
        <svg class="w-[12px] h-[11px]" viewBox="0 0 12 11" fill="none" stroke="#ccc" stroke-width="1.300"><path d="M1 10V1h3l1 2h6v7z"/></svg>
        <span class="ml-[7px]">cDrawing1</span>
      </div>
    </div>
    <div class="flex-1 flex flex-col border-t border-[#0c0c0c] min-h-0">
      <div class="h-[22px] shrink-0 bg-[#1c1d1e] flex items-center pl-[13px] text-[12px] text-[#a4a7a9]">Properties
        <svg class="ml-auto w-[12px] h-[13px]" viewBox="0 0 12 13"><use href="#pin"/></svg>
        <svg class="ml-[4px] mr-[9px] w-[11px] h-[11px]" viewBox="0 0 11 11"><use href="#cross"/></svg>
      </div>
      <div class="h-[25px] shrink-0 flex items-center">
        <div class="w-[198px] h-[24px] bg-[#1e1f20] flex items-center pl-[5px] text-[14px] text-[#b0b3b5]">No selected item.
          <div class="ml-auto mr-[4px] w-0 h-0 border-x-[5px] border-x-transparent border-t-[6px] border-t-[#bbb]"></div>
        </div>
        <svg class="ml-[6px] w-[16px] h-[16px]" viewBox="0 0 16 16" fill="#ccc"><rect x=".5" y=".5" width="15" height="15" fill="none" stroke="#ccc" stroke-dasharray="1 1"/><rect x="3" y="3" width="4" height="4"/><rect x="9" y="3" width="4" height="4" fill="none" stroke="#ccc"/><rect x="3" y="9" width="4" height="4" fill="none" stroke="#ccc"/><rect x="9" y="9" width="4" height="4" fill="none" stroke="#ccc"/></svg>
        <svg class="ml-[9px] w-[16px] h-[16px]" viewBox="0 0 16 16"><rect x=".5" y=".5" width="15" height="15" fill="none" stroke="#ccc" stroke-dasharray="1 1"/><rect x="3" y="3" width="10" height="10" fill="#555"/><path d="M8 4v8M4 8h8" stroke="#eee" stroke-width="2"/></svg>
        <svg class="ml-[9px] w-[16px] h-[16px]" viewBox="0 0 16 16"><rect x=".5" y=".5" width="15" height="15" fill="none" stroke="#ccc" stroke-dasharray="1 1"/><path d="M6 3l6 5-3 .5 2 4-1.500.7-2-4L6 11z" fill="#ddd"/></svg>
        <svg class="ml-[9px] w-[16px] h-[17px]" viewBox="0 0 16 17" fill="#ddd"><path d="M1 7l6 2-1 7-2-4-3 1zM15 0l-7 4 3 1-3 3 6-3-2-1z"/></svg>
      </div>
      <div class="flex-1 min-h-0 flex overflow-hidden">
        <div class="w-[279px] text-[14px] text-[#b4c2d0] [&>div]:h-[25px] [&>div]:flex [&>div]:items-center [&>div]:whitespace-nowrap">
          <div class="pl-[8px] font-bold text-[#c4c8cc]"><svg class="w-[9px] h-[9px]" viewBox="0 0 9 9"><use href="#tri"/></svg><span class="ml-[12px]">General</span></div>
          <div class="ml-[25px] border-b border-[#242526] text-[#b4c2d0]"><span class="w-[130px] pl-[4px]">Color</span><div class="w-[14px] h-[14px] bg-white"></div><span class="ml-[7px]">ByLayer</span></div>
          <div class="ml-[25px] border-b border-[#242526]"><span class="w-[130px] pl-[4px]">Layer</span><span>0</span></div>
          <div class="ml-[25px] border-b border-[#242526]"><span class="w-[130px] pl-[4px]">Linetype</span><div class="w-[60px] h-px bg-[#ccc]"></div><span class="ml-[7px]">ByLayer</span></div>
          <div class="ml-[25px] border-b border-[#242526]"><span class="w-[130px] pl-[4px]">Linetype scale</span><span>1.000000</span></div>
          <div class="ml-[25px] border-b border-[#242526]"><span class="w-[130px] pl-[4px]">Lineweight</span><div class="w-[60px] h-px bg-[#ccc]"></div><span class="ml-[7px]">ByLayer</span></div>
          <div class="ml-[25px] border-b border-[#242526]"><span class="w-[130px] pl-[4px]">Transparency</span><span>ByLayer</span></div>
          <div class="ml-[25px] border-b border-[#242526]"><span class="w-[130px] pl-[4px]">Thickness</span><span>0</span></div>
          <div class="pl-[8px] font-bold text-[#c4c8cc]"><svg class="w-[9px] h-[9px]" viewBox="0 0 9 9"><use href="#tri"/></svg><span class="ml-[12px]">View</span></div>
          <div class="ml-[25px] border-b border-[#242526] text-[#7d7f81]"><span class="w-[130px] pl-[4px]">Center X</span><span>14736.3621</span></div>
          <div class="ml-[25px] border-b border-[#242526] text-[#7d7f81]"><span class="w-[130px] pl-[4px]">Center Y</span><span>-7861.6596</span></div>
          <div class="ml-[25px] border-b border-[#242526] text-[#7d7f81]"><span class="w-[130px] pl-[4px]">Center Z</span><span>0.0000</span></div>
          <div class="ml-[25px] border-b border-[#242526] text-[#7d7f81]"><span class="w-[130px] pl-[4px]">Height</span><span>18413.9839</span></div>
          <div class="ml-[25px] border-b border-[#242526] text-[#7d7f81]"><span class="w-[130px] pl-[4px]">Width</span><span>30094.4960</span></div>
          <div class="pl-[8px] font-bold text-[#c4c8cc]"><svg class="w-[9px] h-[9px]" viewBox="0 0 9 9"><use href="#tri"/></svg><span class="ml-[12px]">Misc</span></div>
          <div class="ml-[25px]"><span class="w-[130px] pl-[4px]">Viewport scale</span><span>1:1</span></div>
        </div>
        <div class="w-[21px] flex flex-col items-center bg-[#1e1f20] relative">
          <div class="w-full h-[240px] bg-[#2a2b2c] flex flex-col items-center pt-[8px]">
            <div class="w-0 h-0 border-x-[5px] border-x-transparent border-b-[6px] border-b-black"></div>
            <div class="mt-[112px] w-[2px] h-[8px] border-y border-dotted border-[#777]"></div>
          </div>
          <div class="mt-[127px] w-0 h-0 border-x-[5px] border-x-transparent border-t-[6px] border-t-black"></div>
        </div>
      </div>
    </div>
  </div>
</div>

<div class="h-[6px] shrink-0 bg-[#2a2b2c] border-t border-[#484848]"></div>

</body>
</html>
